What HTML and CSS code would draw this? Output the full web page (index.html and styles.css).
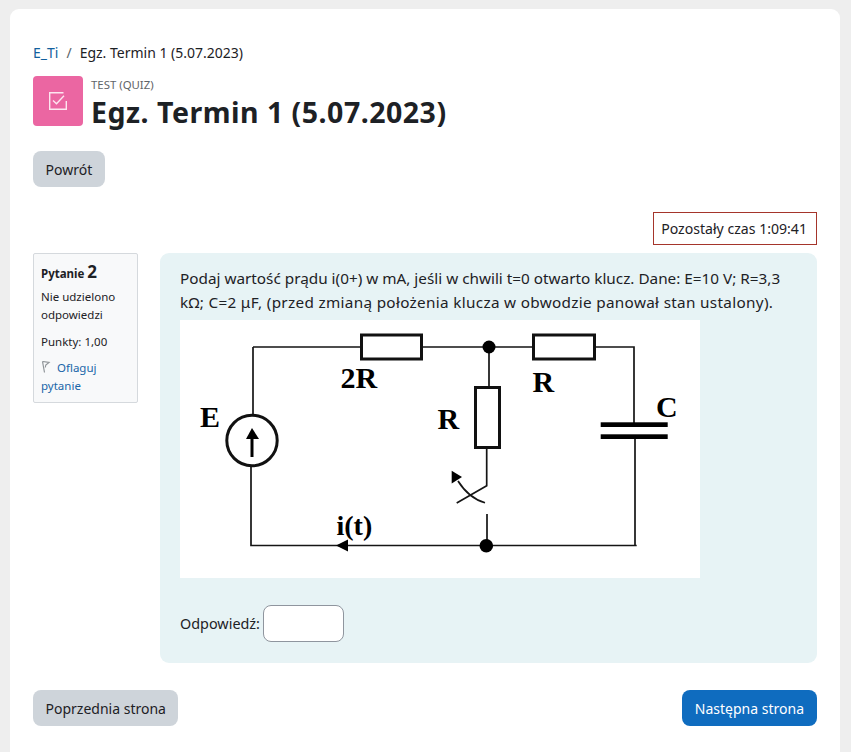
FILE: index.html
```html
<!DOCTYPE html>
<html lang="pl">
<head>
<meta charset="utf-8">
<title>Egz. Termin 1 (5.07.2023)</title>
<link rel="stylesheet" href="styles.css">
</head>
<body>
<main class="card">
  <nav class="crumbs"><a href="#">E_Ti</a><span class="sep">/</span><span>Egz. Termin 1 (5.07.2023)</span></nav>
  <header class="head">
    <div class="modicon">
      <svg width="18" height="18" viewBox="0 0 18 18" fill="none" stroke="#fde6f0" stroke-width="1.400"><path d="M14.500.7H.7V17.300H17.300V9"/><path d="M4 8.500l3.500 3.300 7.500-8"/></svg>
    </div>
    <div class="titles">
      <div class="modtype">TEST (QUIZ)</div>
      <h1>Egz. Termin 1 (5.07.2023)</h1>
    </div>
  </header>
  <a class="btn back" href="#">Powrót</a>
  <div class="timer-row"><div class="timer">Pozostały czas 1:09:41</div></div>
  <section class="question">
    <aside class="info">
      <h3>Pytanie <span class="qno">2</span></h3>
      <p>Nie udzielono odpowiedzi</p>
      <p class="pts">Punkty: 1,00</p>
      <a class="flag" href="#"><svg class="flagicon" width="10" height="12" viewBox="0 0 10 12" fill="none" stroke="#8f9498" stroke-width="1.200"><path d="M1.500.5L3.500 11.500M1.500.5L8 1.500 4.800 4 4.300 6.500"/></svg>Oflaguj pytanie</a>
    </aside>
    <div class="qbox">
      <p class="qtext">Podaj wartość prądu i(0+) w mA, jeśli w chwili t=0 otwarto klucz. Dane: E=10 V; R=3,3 <span class="qline2">kΩ; C=2 μF, (przed zmianą położenia klucza w obwodzie panował stan ustalony).</span></p>
      <svg class="circuit" width="520" height="258" viewBox="0 0 520 258">
        <rect width="520" height="258" fill="#fff"/>
        <g fill="none" stroke="#151515" stroke-width="1.700">
          <path d="M73 27H180M243 27H352M416 27H454V103"/>
          <path d="M73 27V95"/>
          <path d="M71 146V225.500H456.700"/>
          <path d="M309 27V66M306.700 129V165.700L276.700 183"/>
          <path d="M305 182.700C295 180 285 172 278 161"/>
          <path d="M307 194V225M455 117V225"/>
        </g>
        <g fill="#fff" stroke="#111" stroke-width="3">
          <rect x="181.500" y="15" width="60" height="24"/>
          <rect x="353.500" y="15" width="61" height="24"/>
          <rect x="295.500" y="67.500" width="24" height="60"/>
          <circle cx="72" cy="120.500" r="25.200"/>
        </g>
        <g fill="#000">
          <path d="M70.500 119H73.500V137H70.500Z"/>
          <path d="M72 108L79 119H66Z"/>
          <path d="M156 225.500L168 219.500V231.500Z"/>
          <circle cx="309" cy="27" r="6.500"/>
          <circle cx="306.300" cy="225.700" r="6.800"/>
          <path d="M271.700 150.700V163.500L282 157Z"/>
          <rect x="420.700" y="102.300" width="67" height="4.700"/>
          <rect x="420.700" y="114.300" width="67" height="4.700"/>
        </g>
        <g class="lbl">
          <text x="160.500" y="68">2R</text>
          <text x="20" y="107">E</text>
          <text x="156.500" y="215" class="lbl-i">i(t)</text>
          <text x="352.500" y="72">R</text>
          <text x="257.500" y="108.500">R</text>
          <text x="476" y="97">C</text>
        </g>
      </svg>
      <div class="answer">
        <label class="anslabel" for="ans">Odpowiedź:</label>
        <input id="ans" class="ansinput" type="text">
      </div>
    </div>
  </section>
  <div class="pager">
    <a class="btn" href="#">Poprzednia strona</a>
    <a class="btn primary" href="#">Następna strona</a>
  </div>
</main>
</body>
</html>
```

FILE: styles.css
```css
* { box-sizing: border-box; }
html, body { margin: 0; height: 100%; }
body {
  background: #eeeeee;
  color: #1d2125;
  font-family: "Noto Sans", sans-serif;
  font-size: 14px;
  line-height: 24px;
  overflow: hidden;
}
a { color: #0f6cbf; text-decoration: none; }
.card {
  background: #fff;
  margin: 9px 11px 0 10px;
  padding: 32px 23px 40px;
  border-radius: 9px 9px 0 0;
  height: 760px;
}
.crumbs { display: flex; align-items: center; height: 24px; color: #1d2125; }
.crumbs a { color: #115f9e; }
.sep { margin: 0 8px; color: #5a6268; }
.head { display: flex; margin-top: 11px; height: 50px; gap: 8px; }
.modicon {
  width: 50px; height: 50px;
  background: #eb66a2;
  border-radius: 4px;
  display: flex; align-items: center; justify-content: center;
  flex: none;
}
.titles { display: flex; flex-direction: column; }
.modtype { font-size: 11.400px; line-height: 14px; color: #5f6468; margin-top: 1.500px; }
h1 { margin: 1.500px 0 0; font-size: 28.500px; line-height: 38px; font-weight: 700; letter-spacing: .5px; }
.btn {
  display: inline-block;
  background: #ced4da;
  color: #1d2125;
  height: 36px;
  line-height: 37px;
  padding: 0 12.500px;
  border-radius: 8px;
}
.primary { background: #0f6cbf; color: #fff; padding: 0 13px; }
.back { margin-top: 25px; }
.timer-row { display: flex; justify-content: flex-end; margin-top: 25px; }
.timer {
  border: 1px solid #a5352b;
  height: 33px;
  line-height: 31px;
  padding: 0 9px 0 7px;
  background: #fff;
  font-size: 14.100px;
}
.question { display: flex; gap: 22px; margin-top: 8px; align-items: flex-start; }
.info {
  width: 105px;
  flex: none;
  height: 150px;
  background: #f8f9fa;
  border: 1px solid #d5d9dd;
  border-radius: 2px;
  padding: 6px 7px;
  font-size: 11.500px;
  line-height: 18px;
}
.info h3 { margin: 0 0 2px; font-size: 11.500px; line-height: 24px; font-weight: 700; }
.qno { font-size: 17px; }
.info p { margin: 0 0 9px; }
.info .pts { margin-bottom: 8px; }
.flag { display: block; color: #1a66a8; }
.flagicon { margin-right: 6px; vertical-align: -1px; }
.qbox {
  flex: 1;
  height: 410px;
  background: #e7f3f5;
  border-radius: 9px;
  padding: 13px 20px 0;
}
.qtext { margin: 0; font-size: 15.300px; }
.qline2 { letter-spacing: .31px; }
.circuit { display: block; margin-top: 6px; }
.lbl { font-family: "Liberation Serif", serif; font-weight: 700; font-size: 30px; fill: #000; }
.lbl-i { font-size: 28px; }
.answer { display: flex; align-items: center; gap: 3px; margin-top: 27px; }
.anslabel { font-size: 14.400px; }
.ansinput {
  width: 81px; height: 37px;
  border: 1px solid #8f959e;
  border-radius: 8px;
  background: #fff;
  padding: 0 6px;
}
.pager { display: flex; justify-content: space-between; margin-top: 27px; }
```
